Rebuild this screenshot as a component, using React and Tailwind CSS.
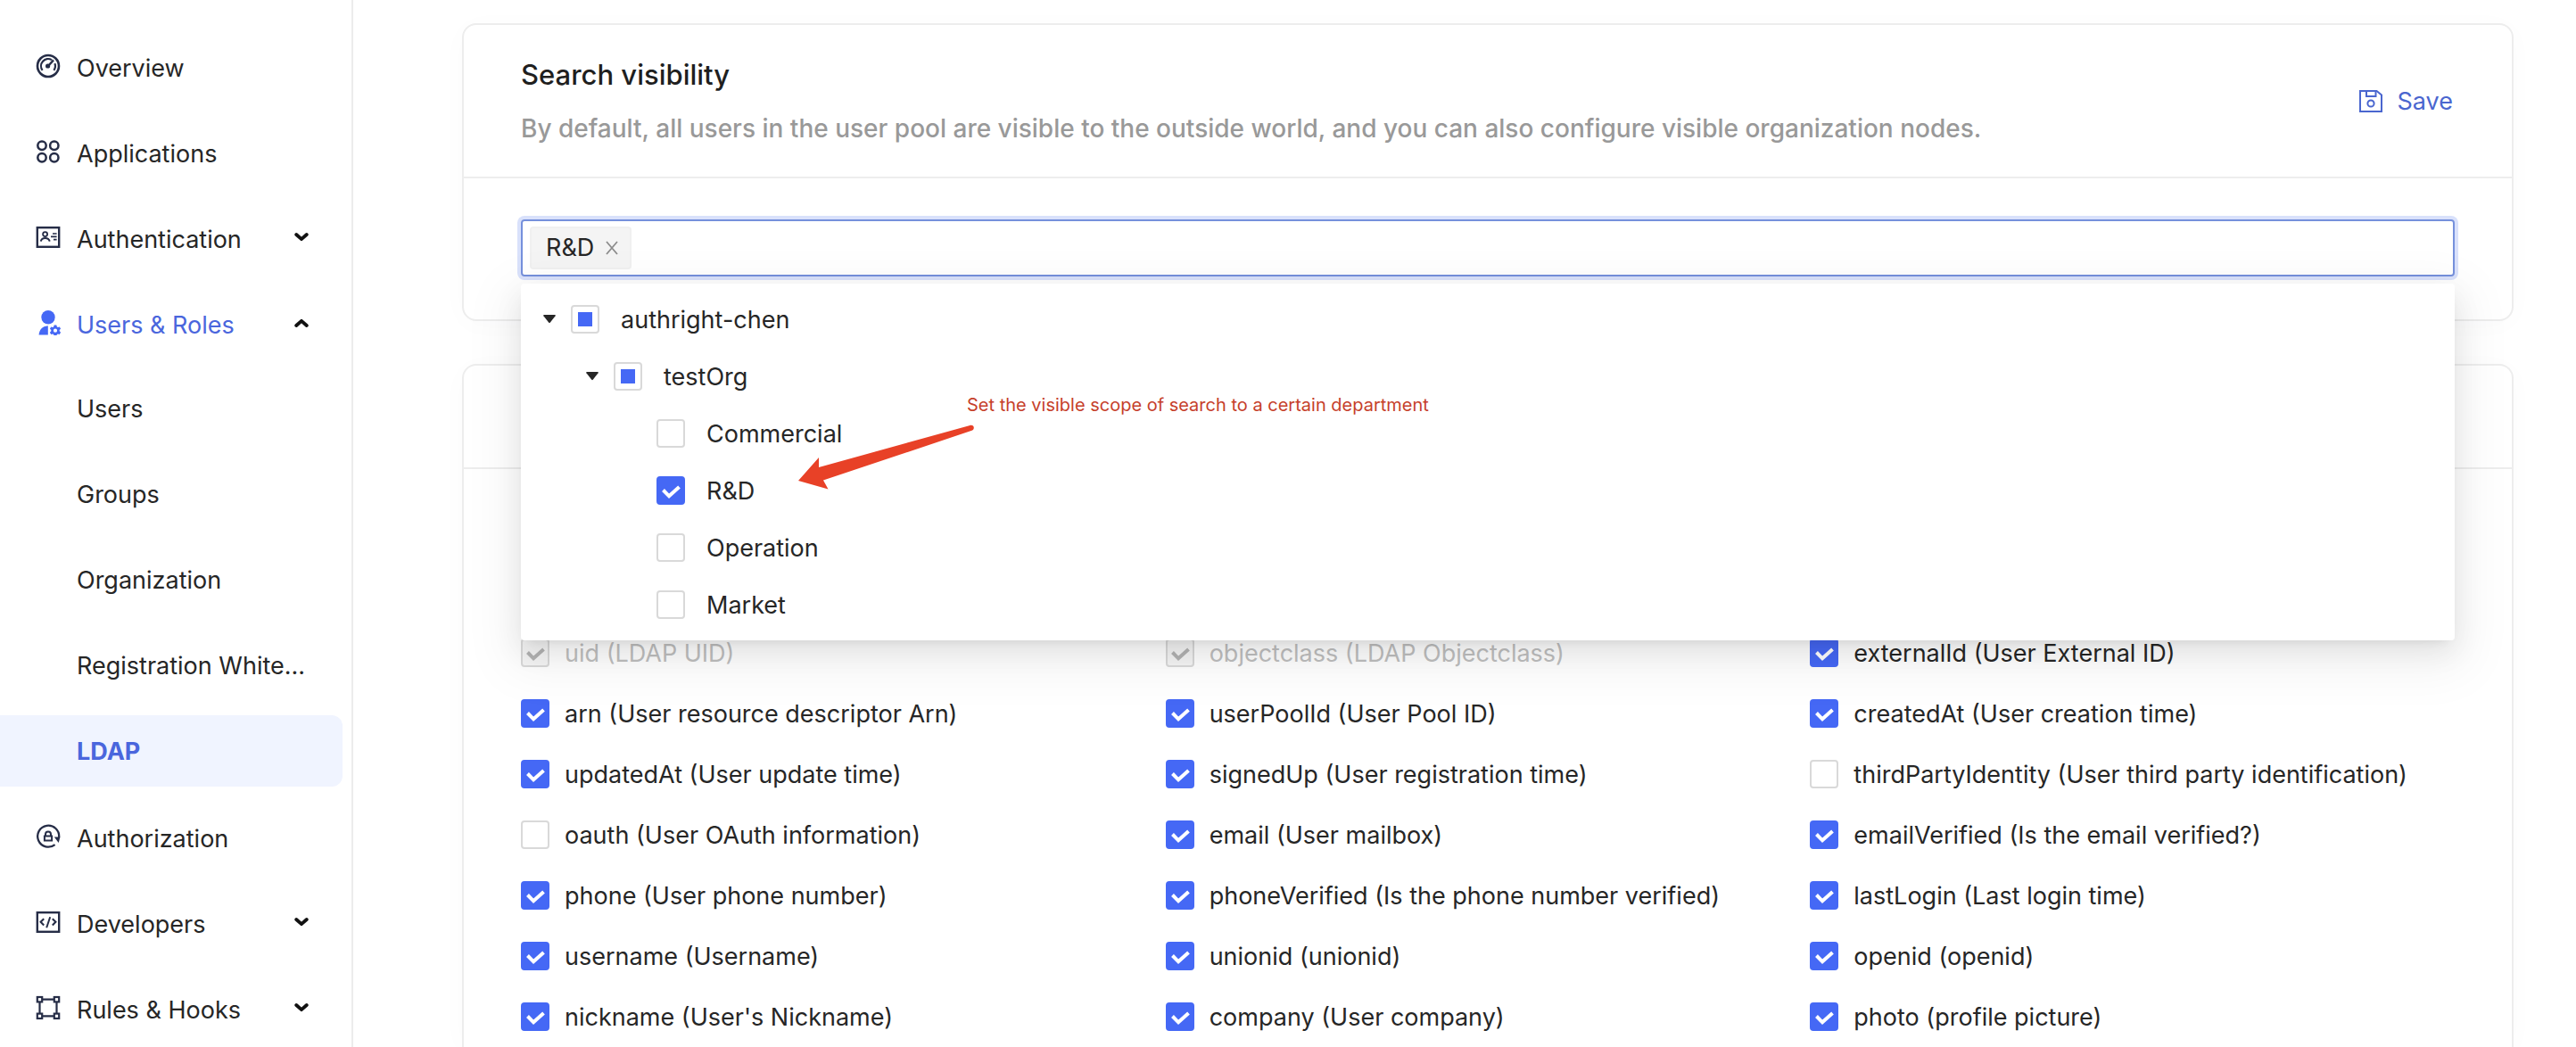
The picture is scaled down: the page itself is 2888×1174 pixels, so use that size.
import React, { useState } from "react";

const iconProps = {
  width: 28,
  height: 28,
  viewBox: "0 0 28 28",
  fill: "none",
  stroke: "currentColor",
  "aria-hidden": true,
  className: "shrink-0",
};

const OverviewIcon = () => (
  <svg {...iconProps}>
    <circle cx="14" cy="14" r="12" strokeWidth="2.6" />
    <path d="M7.6 18.8A8 8 0 0 1 18 7.1" strokeWidth="2.2" />
    <path d="M21.4 11.2a8 8 0 0 1-1 7.6" strokeWidth="2.2" />
    <path d="M14 14l6-6.6" strokeWidth="2.4" />
    <circle cx="13.6" cy="14" r="2.6" fill="currentColor" stroke="none" />
  </svg>
);

const ApplicationsIcon = () => (
  <svg {...iconProps} strokeWidth="2.5">
    <circle cx="7" cy="7.3" r="4.7" />
    <circle cx="20.8" cy="7.3" r="4.7" />
    <circle cx="7" cy="20.7" r="4.7" />
    <circle cx="20.8" cy="20.7" r="4.7" />
  </svg>
);

const AuthenticationIcon = () => (
  <svg {...iconProps}>
    <rect x="1.8" y="3.2" width="24.4" height="21.6" strokeWidth="2.4" />
    <circle cx="10.6" cy="10.6" r="2.5" strokeWidth="1.8" />
    <path d="M5.6 18.6c.8-2.6 2.6-3.6 5-3.6s4.4 1 5.2 3.6" strokeWidth="1.9" />
    <path d="M19 10h4.6M17 13.4h6.6M20 16.6h3.6" strokeWidth="1.6" />
  </svg>
);

const UsersIcon = () => (
  <svg {...iconProps} stroke="none" fill="currentColor">
    <circle cx="14" cy="7.7" r="7.7" />
    <path d="M3.6 27.5c.3-5.6 3.6-9.6 10.2-10.3v10.3z" />
    <path
      fillRule="evenodd"
      d="M20.7 16.6h2.6l.6 1.9 1 .5 1.9-.5 1.3 2.2-1.4 1.4v1.2l1.4 1.4-1.3 2.2-1.9-.5-1 .5-.6 1.9h-2.6l-.6-1.9-1-.5-1.9.5-1.3-2.2 1.4-1.4v-1.2l-1.4-1.4 1.3-2.2 1.9.5 1-.5zM22 20.6a2.1 2.1 0 1 0 0 4.2 2.1 2.1 0 0 0 0-4.2z"
    />
  </svg>
);

const AuthorizationIcon = () => (
  <svg {...iconProps}>
    <path d="M21.6 23.1A12 12 0 1 1 26.1 15" strokeWidth="2.3" />
    <path d="M20.8 14.5h6.6l-1.7 6.4z" fill="currentColor" stroke="none" />
    <path d="M9.9 13.6h8.2v4.8H9.9z" strokeWidth="2" />
    <path d="M11 13.4v-2a3 3 0 0 1 6 0v2" strokeWidth="2" />
  </svg>
);

const DevelopersIcon = () => (
  <svg {...iconProps}>
    <rect x="1.8" y="3.2" width="24.4" height="21.6" strokeWidth="2.4" />
    <path d="M9.2 10.2L5.6 13.8l3.6 3.6M18.8 10.2l3.6 3.6-3.6 3.6" strokeWidth="2.1" />
    <path d="M16.2 8.2l-4 12" strokeWidth="2" />
  </svg>
);

const RulesIcon = () => (
  <svg {...iconProps} strokeWidth="2.2">
    <rect x="1.8" y="2" width="5.4" height="5.4" />
    <rect x="20.8" y="2" width="5.4" height="5.4" />
    <rect x="1.8" y="20.6" width="5.4" height="5.4" />
    <rect x="20.8" y="20.6" width="5.4" height="5.4" />
    <path d="M8 4.7h12M8 23.3h12M4.5 8v12M23.5 8v12" />
  </svg>
);

const Chevron = ({ up }) => (
  <svg width="16" height="12" viewBox="0 0 16 12" fill="none" stroke="#111" strokeWidth="3.8" aria-hidden="true" className="shrink-0">
    <path d={up ? "M2.2 9L8 3.8 13.8 9" : "M2.2 3L8 8.2 13.8 3"} strokeLinecap="round" strokeLinejoin="round" />
  </svg>
);

const SaveIcon = () => (
  <svg width="28" height="28" viewBox="0 0 28 28" fill="none" stroke="currentColor" strokeWidth="2" aria-hidden="true">
    <path d="M2 2h18.5l5.5 4.5v18.5H2z" />
    <path d="M9 2v6h10.5V2" />
    <circle cx="14" cy="16" r="3.6" />
  </svg>
);

const topItem = "flex h-20 w-full items-center pl-10 pr-12 pt-0.5 text-left";

function NavLink({ icon, label }) {
  return (
    <li>
      <a href="#" className={topItem + " text-[#262626]"}>
        <span className="mb-1.5 mr-[18px] text-[#262d47]">{icon}</span>
        {label}
      </a>
    </li>
  );
}

function NavGroup({ icon, label, open, children }) {
  return (
    <li>
      <button type="button" aria-expanded={!!open} className={topItem + (open ? " text-[#4a66dd]" : " text-[#262626]")}>
        <span className={open ? "mb-1.5 mr-[18px] text-[#4568f5]" : "mb-1.5 mr-[18px] text-[#262d47]"}>{icon}</span>
        <span className="flex-1">{label}</span>
        <span className="mb-1.5">
          <Chevron up={open} />
        </span>
      </button>
      {children}
    </li>
  );
}

const subItems = ["Users", "Groups", "Organization", "Registration White...", "LDAP"];

function Sidebar() {
  return (
    <nav aria-label="Console" className="w-[396px] shrink-0 border-r-2 border-[#ececec] pt-9">
      <ul className="flex flex-col gap-4">
        <NavLink icon={<OverviewIcon />} label="Overview" />
        <NavLink icon={<ApplicationsIcon />} label="Applications" />
        <NavGroup icon={<AuthenticationIcon />} label="Authentication" />
        <NavGroup icon={<UsersIcon />} label="Users & Roles" open>
          <ul className="mt-[14px] mb-[2px] flex flex-col gap-4 pr-[10px]">
            {subItems.map((name) => (
              <li key={name}>
                <a
                  href="#"
                  aria-current={name === "LDAP" ? "page" : undefined}
                  className={
                    name === "LDAP"
                      ? "flex h-20 items-center rounded-r-xl bg-[#f0f4ff] pl-[86px] pt-0.5 font-bold text-[#4a66dd]"
                      : "flex h-20 items-center whitespace-nowrap pl-[86px] pt-0.5 text-[#262626]"
                  }
                >
                  {name}
                </a>
              </li>
            ))}
          </ul>
        </NavGroup>
        <NavLink icon={<AuthorizationIcon />} label="Authorization" />
        <NavGroup icon={<DevelopersIcon />} label="Developers" />
        <NavGroup icon={<RulesIcon />} label="Rules & Hooks" />
      </ul>
    </nav>
  );
}

function CheckBox({ id, checked, disabled, partial, onChange }) {
  return (
    <span className="grid size-8 shrink-0 place-items-center">
      <input
        id={id}
        type="checkbox"
        checked={checked}
        disabled={disabled}
        onChange={onChange}
        ref={(el) => {
          if (el) el.indeterminate = !!partial;
        }}
        className={
          "col-start-1 row-start-1 size-8 appearance-none rounded-sm border-2 " +
          (disabled ? "border-[#d9d9d9] bg-[#f5f5f5]" : checked ? "border-[#4568f5] bg-[#4568f5]" : "border-[#d9d9d9] bg-white")
        }
      />
      {partial && <span className="pointer-events-none col-start-1 row-start-1 size-4 bg-[#4568f5]" />}
      {checked && (
        <svg
          width="32"
          height="32"
          viewBox="0 0 32 32"
          fill="none"
          stroke={disabled ? "#b3b3b3" : "#fff"}
          strokeWidth="4"
          aria-hidden="true"
          className="pointer-events-none col-start-1 row-start-1"
        >
          <path d="M7.5 15.5l6.6 6.8L25.5 12" />
        </svg>
      )}
    </span>
  );
}

const tree = [
  { name: "authright-chen", depth: 0, partial: true },
  { name: "testOrg", depth: 1, partial: true },
  { name: "Commercial", depth: 2 },
  { name: "R&D", depth: 2, checked: true },
  { name: "Operation", depth: 2 },
  { name: "Market", depth: 2 },
];
const indents = ["pl-4", "pl-16", "pl-28"];

function TreeRow({ node }) {
  const [on, setOn] = useState(!!node.checked);
  const id = "org-" + node.name;
  return (
    <li className={"flex h-16 items-center " + indents[node.depth]}>
      {node.partial ? (
        <button type="button" aria-label={"Collapse " + node.name} className="grid h-8 w-8 place-items-center">
          <svg width="14" height="10" viewBox="0 0 14 10" fill="#262626" aria-hidden="true">
            <path d="M1 0h12a.8.8 0 0 1 .6 1.2L7.7 8.8a.9.9 0 0 1-1.4 0L.4 1.2A.8.8 0 0 1 1 0z" />
          </svg>
        </button>
      ) : (
        <span className="w-8" />
      )}
      <span className="ml-2 mr-6 flex">
        <CheckBox id={id} checked={on} partial={node.partial} onChange={() => setOn(!on)} />
      </span>
      <label htmlFor={id} className="pt-0.5">
        {node.name}
      </label>
    </li>
  );
}

const fields = [
  ["uid (LDAP UID)", "locked"],
  ["objectclass (LDAP Objectclass)", "locked"],
  ["externalId (User External ID)", "on"],
  ["arn (User resource descriptor Arn)", "on"],
  ["userPoolId (User Pool ID)", "on"],
  ["createdAt (User creation time)", "on"],
  ["updatedAt (User update time)", "on"],
  ["signedUp (User registration time)", "on"],
  ["thirdPartyIdentity (User third party identification)", "off"],
  ["oauth (User OAuth information)", "off"],
  ["email (User mailbox)", "on"],
  ["emailVerified (Is the email verified?)", "on"],
  ["phone (User phone number)", "on"],
  ["phoneVerified (Is the phone number verified)", "on"],
  ["lastLogin (Last login time)", "on"],
  ["username (Username)", "on"],
  ["unionid (unionid)", "on"],
  ["openid (openid)", "on"],
  ["nickname (User's Nickname)", "on"],
  ["company (User company)", "on"],
  ["photo (profile picture)", "on"],
];

function Field({ label, state }) {
  const [on, setOn] = useState(state !== "off");
  const id = "field-" + label.split(" ")[0];
  const locked = state === "locked";
  return (
    <div className="flex h-[68px] items-center gap-[17px]">
      <CheckBox id={id} checked={on} disabled={locked} onChange={() => setOn(!on)} />
      <label htmlFor={id} className={locked ? "whitespace-nowrap pt-0.5 text-[#bfbfbf]" : "whitespace-nowrap pt-0.5"}>
        {label}
      </label>
    </div>
  );
}

function OrgSelect() {
  return (
    <div className="relative">
      <div className="flex h-16 items-center rounded-sm border-2 border-[#7590dc] px-2 ring-4 ring-[#d9e1fb]">
        <span className="flex h-12 shrink-0 items-center rounded-sm border-2 border-[#f0f0f0] bg-[#f4f4f4] px-4">
          R&amp;D
          <button type="button" aria-label="Remove R&D" className="-mr-1 ml-3 text-[#8c8c8c]">
            <svg width="16" height="16" viewBox="0 0 16 16" fill="none" stroke="currentColor" strokeWidth="1.8" aria-hidden="true">
              <path d="M2 1l12 14M14 1L2 15" />
            </svg>
          </button>
        </span>
        <input aria-label="Visible organization nodes" className="ml-2 min-w-0 flex-1 bg-transparent outline-none" />
      </div>
      <div className="absolute inset-x-0 top-full z-10 mt-2 rounded bg-white py-2 shadow-[0_6px_12px_-8px_rgba(0,0,0,0.12),0_12px_32px_0_rgba(0,0,0,0.08),0_18px_56px_16px_rgba(0,0,0,0.05)]">
        <ul>
          {tree.map((node) => (
            <TreeRow key={node.name} node={node} />
          ))}
        </ul>
        <p className="absolute left-[500px] top-[120px] whitespace-nowrap text-xl leading-8 text-[#c63f2b]">
          Set the visible scope of search to a certain department
        </p>
        <svg width="200" height="76" viewBox="0 0 200 76" fill="#e84127" aria-hidden="true" className="absolute left-[310px] top-[156px]">
          <path d="M1 65L24 39v11L193.5 3c4.5-1 6 4 2 5.8L29 64.5l5.500 10z" />
        </svg>
      </div>
    </div>
  );
}

const card = "border-2 border-[#ededed] bg-white shadow-[0_4px_32px_rgba(20,30,90,0.02)]";

export default function App() {
  return (
    <div className="flex h-screen overflow-hidden bg-white font-['Inter',sans-serif] text-[27px] leading-10 text-[#262626]">
      <Sidebar />
      <main className="flex min-w-0 flex-1 flex-col gap-12 pl-[122px] pr-[70px] pt-[26px]">
        <section className={"shrink-0 rounded-2xl " + card}>
          <header className="flex items-center justify-between border-b-2 border-[#ededed] px-16 pb-[34px] pt-[34px]">
            <div>
              <h1 className="text-[31px] font-medium leading-[44px] text-[#1f1f1f]">Search visibility</h1>
              <p className="mt-[18px] text-[28px] font-medium text-[#999]">
                By default, all users in the user pool are visible to the outside world, and you can also configure visible organization nodes.
              </p>
            </div>
            <button type="button" className="flex items-center gap-4 pr-0.5 pt-0.5 text-[#4a66cf]">
              <SaveIcon />
              Save
            </button>
          </header>
          <div className="px-16 pb-12 pt-[46px]">
            <OrgSelect />
          </div>
        </section>
        <section className={"min-h-0 flex-1 rounded-t-2xl border-b-0 " + card}>
          <header className="h-[116px] border-b-2 border-[#ededed]" />
          <div className="grid grid-cols-3 px-16 pt-[172px]">
            {fields.map(([label, state]) => (
              <Field key={label} label={label} state={state} />
            ))}
          </div>
        </section>
      </main>
    </div>
  );
}
